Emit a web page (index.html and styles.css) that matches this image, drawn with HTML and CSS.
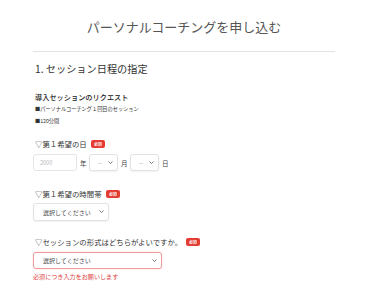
FILE: index.html
```html
<!DOCTYPE html>
<html lang="ja">
<head>
<meta charset="utf-8">
<link rel="stylesheet" href="styles.css">
</head>
<body>
<div class="page">
  <h1 class="title">パーソナルコーチングを申し込む</h1>
  <hr class="rule">
  <h2 class="section">1. セッション日程の指定</h2>

  <div class="request">
    <p class="req-title">導入セッションのリクエスト</p>
    <p class="req-line">■パーソナルコーチング１回目のセッション</p>
    <p class="req-line">■120分間</p>
  </div>

  <div class="field f-date">
    <div class="label">▽第１希望の日<span class="badge"><span>必須</span></span></div>
    <div class="date-row">
      <input class="input year" type="text" placeholder="2000">
      <span class="unit">年</span>
      <span class="sel-wrap w-small">
        <select class="select"><option>--</option></select>
        <svg class="chev" viewBox="0 0 10 6" width="5" height="3"><path d="M1 1l4 4 4-4" fill="none" stroke="#555" stroke-width="1.6"/></svg>
      </span>
      <span class="unit">月</span>
      <span class="sel-wrap w-small">
        <select class="select"><option>--</option></select>
        <svg class="chev" viewBox="0 0 10 6" width="5" height="3"><path d="M1 1l4 4 4-4" fill="none" stroke="#555" stroke-width="1.6"/></svg>
      </span>
      <span class="unit">日</span>
    </div>
  </div>

  <div class="field f-time">
    <div class="label">▽第１希望の時間帯<span class="badge"><span>必須</span></span></div>
    <div class="sel-wrap w-mid">
      <select class="select"><option>選択してください</option></select>
      <svg class="chev" viewBox="0 0 10 6" width="5" height="3"><path d="M1 1l4 4 4-4" fill="none" stroke="#555" stroke-width="1.6"/></svg>
    </div>
  </div>

  <div class="field f-type">
    <div class="label">▽セッションの形式はどちらがよいですか。<span class="badge"><span>必須</span></span></div>
    <div class="sel-wrap w-wide error">
      <select class="select"><option>選択してください</option></select>
      <svg class="chev" viewBox="0 0 10 6" width="5" height="3"><path d="M1 1l4 4 4-4" fill="none" stroke="#555" stroke-width="1.6"/></svg>
    </div>
    <p class="err-msg">必須につき入力をお願いします</p>
  </div>
</div>
</body>
</html>
```

FILE: styles.css
```css
* { box-sizing: border-box; }
html, body { margin: 0; padding: 0; background: #fff; }
body {
  font-family: "Noto Sans CJK JP", "Noto Sans", sans-serif;
  color: #333;
}
.page {
  width: 381px;
  padding: 0 46px 0 33px;
}
.title {
  margin: 0;
  padding-top: 17px;
  height: 51px;
  font-size: 13px;
  line-height: 19px;
  font-weight: 400;
  text-align: center;
  color: #555;
}
.rule {
  margin: 0;
  border: 0;
  border-top: 1px solid #e2e2e2;
  height: 0;
}
.section {
  margin: 10px 0 0 2px;
  font-size: 10.2px;
  line-height: 14px;
  font-weight: 400;
  color: #333;
}
.request { margin: 16px 0 0 2px; }
.req-title {
  margin: 0;
  font-size: 7.2px;
  line-height: 10px;
  color: #222;
  font-weight: 500;
}
.req-line {
  margin: 2px 0 0;
  font-size: 5.2px;
  line-height: 10px;
  color: #333;
}
.f-date { margin-top: 13px; }
.f-time { margin-top: 18px; }
.f-type { margin-top: 16px; }
.label {
  display: flex;
  align-items: center;
  margin-left: 2px;
  font-size: 7.4px;
  line-height: 10px;
  color: #333;
}
.badge {
  display: inline-flex;
  align-items: center;
  justify-content: center;
  width: 14px;
  height: 8px;
  margin-left: 4px;
  background: #e43b33;
  border-radius: 2px;
  overflow: hidden;
}
.badge span {
  color: #fff;
  font-size: 8px;
  font-weight: 700;
  transform: scale(0.5);
  white-space: nowrap;
}
.date-row {
  display: flex;
  align-items: center;
  margin-top: 5px;
  gap: 3px;
}
.input {
  width: 44px;
  height: 17px;
  border: 1px solid #e4e4e4;
  border-radius: 3px;
  padding: 0 6px;
  font-family: inherit;
  font-size: 5.5px;
  color: #333;
  outline: none;
}
.input::placeholder { color: #bbb; }
.unit {
  font-size: 6.5px;
  color: #444;
  width: 6px;
}
.sel-wrap {
  position: relative;
  display: block;
  height: 17px;
}
.sel-wrap.w-small { width: 29px; }
.sel-wrap.w-mid { width: 76px; margin-top: 4px; height: 18px; }
.sel-wrap.w-wide { width: 129px; margin-top: 5px; height: 17px; }
.select {
  appearance: none;
  -webkit-appearance: none;
  display: block;
  width: 100%;
  height: 100%;
  margin: 0;
  border: 1px solid #e2e2e2;
  border-radius: 3px;
  background: #fff;
  box-shadow: 0 1px 2px rgba(0,0,0,0.06);
  font-family: inherit;
  font-size: 6px;
  color: #444;
  padding: 0 0 0 9px;
  outline: none;
}
.w-small .select { padding-left: 8px; color: #999; }
.chev {
  position: absolute;
  right: 5px;
  top: 7px;
}
.error .select {
  border-color: #f19b9b;
  background: #fff;
  box-shadow: 0 0 2px rgba(230, 80, 80, 0.25);
}
.err-msg {
  margin: 4px 0 0 0;
  font-size: 6.1px;
  line-height: 8px;
  color: #e0403a;
}
```
